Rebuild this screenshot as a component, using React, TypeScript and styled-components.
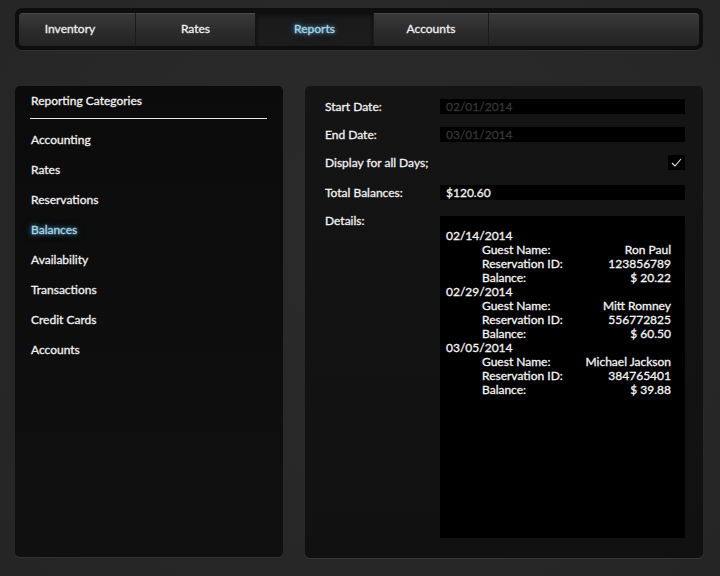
import React from "react";
import styled, { createGlobalStyle, css } from "styled-components";

const Global = createGlobalStyle`
  html, body { margin: 0; padding: 0; }
  body {
    background: #282828;
    font-family: "Lato", "Open Sans", "Liberation Sans", sans-serif;
    color: #f2f2f2;
    -webkit-text-stroke: 0.3px currentColor;
  }
`;

const Page = styled.div`
  width: 720px;
  height: 576px;
  box-sizing: border-box;
  padding: 8px 17px 0 15px;
  display: flex;
  flex-direction: column;
  background: radial-gradient(circle at 50% 40%, #2b2b2b, #252525);
`;

const NavFrame = styled.div`
  height: 42px;
  box-sizing: border-box;
  padding: 5px 4px 4px 4px;
  background: #0e0e0e;
  border-radius: 7px;
  box-shadow: 0 1px 0 rgba(255,255,255,0.05);
`;

const NavBar = styled.nav`
  height: 33px;
  display: flex;
  border-radius: 4px;
  overflow: hidden;
  background: linear-gradient(#3a3a3a, #2a2a2a 60%, #242424);
  box-shadow: inset 0 1px 0 rgba(255,255,255,0.08);
`;

const Tab = styled.div<{ $w?: number; $active?: boolean; $first?: boolean }>`
  ${(p) => (p.$w ? css`width: ${p.$w}px;` : css`flex: 1;`)}
  display: flex;
  align-items: center;
  justify-content: center;
  box-sizing: border-box;
  font-size: 12px;
  padding-bottom: 2px;
  padding-right: ${(p) => (p.$first ? 14 : 0)}px;
  color: #f0f0f0;
  border-left: ${(p) => (p.$first ? "none" : "1px solid #1a1a1a")};
  ${(p) =>
    p.$active &&
    css`
      background: linear-gradient(#1a1a1a, #1d1d1d);
      box-shadow: inset 0 2px 4px rgba(0,0,0,0.6);
      color: #a9d8ec;
      text-shadow: 0 0 4px rgba(110, 190, 230, 0.9), 0 0 8px rgba(80, 160, 210, 0.5);
      border-left-color: #141414;
    `}
`;

const Panels = styled.div`
  margin-top: 36px;
  display: flex;
  gap: 22px;
  height: 472px;
`;

const LeftPanel = styled.aside`
  width: 268px;
  height: 471px;
  box-sizing: border-box;
  padding: 0 16px 0 15px;
  background: linear-gradient(#0b0b0b, #101010);
  border-radius: 5px;
  box-shadow: 0 1px 0 rgba(255,255,255,0.06);
`;

const PanelHeader = styled.div`
  height: 33px;
  box-sizing: border-box;
  padding-top: 8px;
  padding-left: 1px;
  font-size: 12px;
  line-height: 14px;
  border-bottom: 1.5px solid #e8e8e8;
`;

const CategoryList = styled.ul`
  list-style: none;
  margin: 6px 0 0;
  padding: 0;
`;

const Category = styled.li<{ $active?: boolean }>`
  height: 30px;
  line-height: 30px;
  font-size: 12px;
  padding-left: 1px;
  color: ${(p) => (p.$active ? "#a9d8ec" : "#f2f2f2")};
  ${(p) =>
    p.$active &&
    css`
      text-shadow: 0 0 4px rgba(110, 190, 230, 0.9), 0 0 8px rgba(80, 160, 210, 0.5);
    `}
`;

const RightPanel = styled.section`
  width: 398px;
  height: 472px;
  box-sizing: border-box;
  padding: 13px 18px 0 20px;
  background: linear-gradient(#141414, #111111);
  border-radius: 5px;
  box-shadow: 0 1px 0 rgba(255,255,255,0.08);
  display: flex;
  flex-direction: column;
`;

const FormRow = styled.div<{ $after?: number }>`
  display: flex;
  align-items: center;
  min-height: 15px;
  margin-bottom: ${(p) => p.$after ?? 0}px;
`;

const FormRowTop = styled(FormRow)`
  align-items: flex-start;
`;

const Label = styled.div`
  width: 115px;
  font-size: 12px;
  line-height: 14px;
  color: #f2f2f2;
`;

const DetailsLabel = styled(Label)`
  margin-top: -2px;
`;

const Field = styled.div<{ $dim?: boolean }>`
  width: 245px;
  height: 15px;
  box-sizing: border-box;
  padding-left: 6px;
  background: #000;
  font-size: 12px;
  line-height: 15px;
  color: ${(p) => (p.$dim ? "#363636" : "#f5f5f5")};
`;

const Spacer = styled.div`
  flex: 1;
`;

const CheckBox = styled.div`
  width: 17px;
  height: 15px;
  background: #000;
  display: flex;
  align-items: center;
  justify-content: center;
`;

const DetailsBox = styled.div`
  width: 245px;
  height: 322px;
  box-sizing: border-box;
  padding: 13px 14px 0 6px;
  background: #000;
  font-size: 12px;
  line-height: 14px;
  color: #f5f5f5;
`;

const DateLine = styled.div``;

const DetailLine = styled.div`
  display: flex;
  justify-content: space-between;
  padding-left: 36px;
`;

const records = [
  { date: "02/14/2014", name: "Ron Paul", id: "123856789", bal: "$ 20.22" },
  { date: "02/29/2014", name: "Mitt Romney", id: "556772825", bal: "$ 60.50" },
  { date: "03/05/2014", name: "Michael Jackson", id: "384765401", bal: "$ 39.88" },
];

const categories = [
  "Accounting",
  "Rates",
  "Reservations",
  "Balances",
  "Availability",
  "Transactions",
  "Credit Cards",
  "Accounts",
];

export default function App() {
  return (
    <>
      <Global />
      <Page>
        <NavFrame>
          <NavBar>
            <Tab $w={116} $first>Inventory</Tab>
            <Tab $w={120}>Rates</Tab>
            <Tab $w={118} $active>Reports</Tab>
            <Tab $w={115}>Accounts</Tab>
            <Tab />
          </NavBar>
        </NavFrame>
        <Panels>
          <LeftPanel>
            <PanelHeader>Reporting Categories</PanelHeader>
            <CategoryList>
              {categories.map((c) => (
                <Category key={c} $active={c === "Balances"}>
                  {c}
                </Category>
              ))}
            </CategoryList>
          </LeftPanel>
          <RightPanel>
            <FormRow $after={13}>
              <Label>Start Date:</Label>
              <Field $dim>02/01/2014</Field>
            </FormRow>
            <FormRow $after={13}>
              <Label>End Date:</Label>
              <Field $dim>03/01/2014</Field>
            </FormRow>
            <FormRow $after={15}>
              <Label>Display for all Days;</Label>
              <Spacer />
              <CheckBox>
                <svg width="11" height="9" viewBox="0 0 11 9">
                  <path d="M1 5 L4 8 L10 1" fill="none" stroke="#e8e8e8" strokeWidth="1.1" />
                </svg>
              </CheckBox>
            </FormRow>
            <FormRow $after={16}>
              <Label>Total Balances:</Label>
              <Field>$120.60</Field>
            </FormRow>
            <FormRowTop>
              <DetailsLabel>Details:</DetailsLabel>
              <DetailsBox>
                {records.map((r) => (
                  <React.Fragment key={r.date}>
                    <DateLine>{r.date}</DateLine>
                    <DetailLine>
                      <span>Guest Name:</span>
                      <span>{r.name}</span>
                    </DetailLine>
                    <DetailLine>
                      <span>Reservation ID:</span>
                      <span>{r.id}</span>
                    </DetailLine>
                    <DetailLine>
                      <span>Balance:</span>
                      <span>{r.bal}</span>
                    </DetailLine>
                  </React.Fragment>
                ))}
              </DetailsBox>
            </FormRowTop>
          </RightPanel>
        </Panels>
      </Page>
    </>
  );
}
